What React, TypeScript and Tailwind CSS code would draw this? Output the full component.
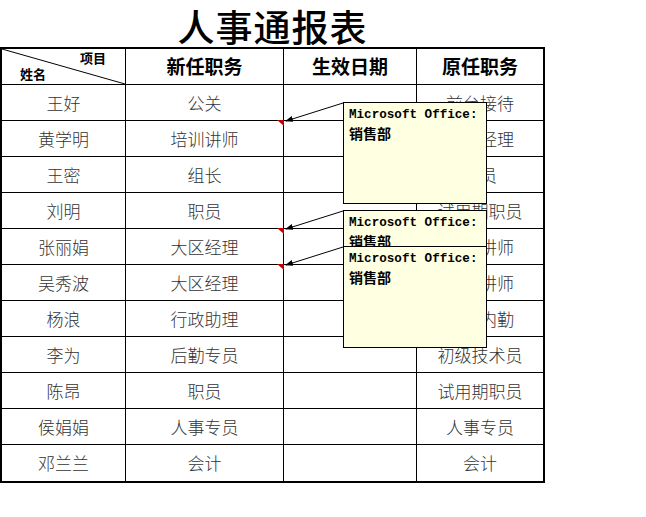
import React from 'react';

const rows = [
  { name: '王好', next: '公关', prev: '前台接待' },
  { name: '黄学明', next: '培训讲师', prev: '销售经理' },
  { name: '王密', next: '组长', prev: '职员' },
  { name: '刘明', next: '职员', prev: '试用期职员' },
  { name: '张丽娟', next: '大区经理', prev: '培训讲师' },
  { name: '吴秀波', next: '大区经理', prev: '培训讲师' },
  { name: '杨浪', next: '行政助理', prev: '行政内勤' },
  { name: '李为', next: '后勤专员', prev: '初级技术员' },
  { name: '陈昂', next: '职员', prev: '试用期职员' },
  { name: '侯娟娟', next: '人事专员', prev: '人事专员' },
  { name: '邓兰兰', next: '会计', prev: '会计' },
];

const cjk = { fontFamily: '"Noto Sans CJK SC", "Noto Sans", sans-serif' };

// comment boxes: top offset on the page, and where the arrow lands
const notes = [
  { top: 102, y: 121 },
  { top: 210, y: 229 },
  { top: 246, y: 265 },
];

const Note = ({ top }: { top: number }) => (
  <div
    className="absolute left-[343px] w-[144px] h-[102px] bg-[#ffffe1] border border-black pl-[5px] pt-[3px]"
    style={{ top }}
  >
    <div className="text-[12.6px] leading-[18px] font-bold text-black" style={{ fontFamily: '"Liberation Mono", monospace' }}>
      Microsoft Office:
    </div>
    <div className="text-[14px] leading-[18px] font-bold text-black" style={cjk}>
      销售部
    </div>
  </div>
);

export default function App() {
  return (
    <div className="relative w-[646px] h-[517px] bg-white overflow-hidden" style={cjk}>
      <div className="w-[545px]">
        <div className="h-[47px] flex items-center justify-center pt-[5px] text-[37px] leading-none font-medium text-black tracking-[1px]">
          人事通报表
        </div>

        <div className="grid grid-cols-[124px_158px_133px_126px] border-2 border-black">
          {/* header */}
          <div className="relative h-9 border-r border-b border-black">
            <svg className="absolute inset-0" width="123" height="35">
              <line x1="0" y1="0" x2="123" y2="35" stroke="black" strokeWidth="1" />
            </svg>
            <span className="absolute left-[78px] top-[1px] text-[13px] leading-[16px] font-bold text-black">项目</span>
            <span className="absolute left-[18px] top-[17px] text-[13px] leading-[16px] font-bold text-black">姓名</span>
          </div>
          <div className="h-9 border-r border-b border-black flex items-center justify-center text-[19px] font-bold text-black">新任职务</div>
          <div className="h-9 border-r border-b border-black flex items-center justify-center text-[19px] font-bold text-black">生效日期</div>
          <div className="h-9 border-b border-black flex items-center justify-center text-[19px] font-bold text-black">原任职务</div>

          {rows.map((r, i) => {
            const bottom = i < rows.length - 1 ? 'border-b' : '';
            return (
              <React.Fragment key={i}>
                <div className={`h-9 border-r ${bottom} border-black flex items-center justify-center text-[17px] font-light text-[#333]`}>{r.name}</div>
                <div className={`h-9 border-r ${bottom} border-black flex items-center justify-center text-[17px] font-light text-[#333]`}>{r.next}</div>
                <div className={`h-9 border-r ${bottom} border-black`} />
                <div className={`h-9 ${bottom} border-black flex items-center justify-center text-[17px] font-light text-[#333]`}>{r.prev}</div>
              </React.Fragment>
            );
          })}
        </div>
      </div>

      {/* comment arrows and red markers */}
      <svg className="absolute inset-0 pointer-events-none" width="646" height="517">
        <defs>
          <marker id="ah" markerWidth="8" markerHeight="6" refX="7" refY="3" orient="auto">
            <path d="M0,0 L8,3 L0,6 Z" fill="black" />
          </marker>
        </defs>
        {notes.map((n, i) => (
          <g key={i}>
            <polygon points={`277,${n.y - 1} 284,${n.y - 1} 284,${n.y + 5}`} fill="#c00000" />
            <line x1="343" y1={n.top + 1} x2="286" y2={n.y} stroke="black" strokeWidth="1" markerEnd="url(#ah)" />
          </g>
        ))}
      </svg>

      {notes.map((n, i) => (
        <Note key={i} top={n.top} />
      ))}
    </div>
  );
}
